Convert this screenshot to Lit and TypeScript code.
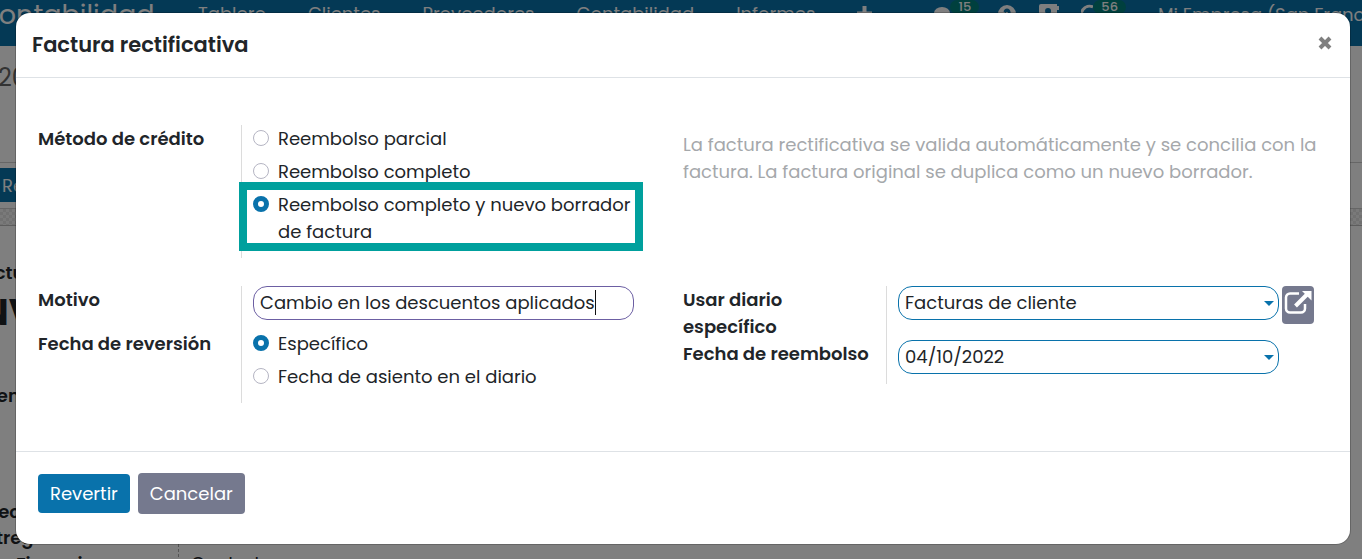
import { LitElement, html, css, svg } from "lit";
import { customElement, state } from "lit/decorators.js";

const baseFont = css`
  :host {
    font-family: Poppins, Inter, "Open Sans", sans-serif;
    font-size: 18px;
    line-height: 27px;
    color: #212529;
  }
  * {
    box-sizing: border-box;
  }
`;

@customElement("invoice-page")
class InvoicePage extends LitElement {
  static styles = [
    baseFont,
    css`
      :host {
        display: block;
        height: 100%;
        overflow: hidden;
        background: #fff;
      }
      .nav {
        height: 46px;
        display: flex;
        align-items: center;
        background: #0972ab;
        color: #fff;
        white-space: nowrap;
        overflow: hidden;
      }
      .brand {
        font-size: 27px;
        margin-left: -22px;
        width: 220px;
        padding-bottom: 18px;
        flex: none;
      }
      .menu {
        display: flex;
        gap: 42px;
        padding-bottom: 20px;
      }
      .menu a {
        color: inherit;
        text-decoration: none;
      }
      .menu svg {
        display: block;
        margin-top: 6px;
      }
      .tray {
        margin-left: auto;
        display: flex;
        align-items: flex-start;
        height: 46px;
      }
      .tray svg {
        display: block;
        margin-top: 4px;
        fill: #fff;
      }
      .chip {
        background: #00807d;
        border-radius: 12px;
        font-size: 13px;
        line-height: 14px;
        padding: 0 8px;
        font-weight: 500;
      }
      .help {
        margin-left: 18px;
      }
      .book {
        margin-left: 22px;
      }
      .clock {
        margin-left: 22px;
      }
      .company {
        width: 204px;
        margin-left: 32px;
        padding-top: 1px;
      }
      .crumbs {
        height: 117px;
        border-bottom: 1px solid #ccc;
        margin-left: -24px;
        padding: 18px 22px;
        font-size: 24px;
        color: #666;
      }
      .status {
        height: 46px;
        padding: 5px 0;
        border-bottom: 1px solid #ccc;
        margin-left: -12px;
      }
      .status button {
        border: 0;
        height: 34px;
        padding: 0 14px;
        background: #0972ab;
        color: #fff;
        font: inherit;
      }
      .strip {
        height: 17px;
        border-bottom: 1px solid #bbb;
        background: repeating-conic-gradient(#e2e2e2 0 25%, #f4f4f4 0 50%) 0 0 / 6px 6px;
      }
      .sheet {
        margin-left: -27px;
        padding-top: 33px;
        font-weight: 600;
      }
      .number {
        font-size: 36px;
        line-height: 54px;
        font-weight: 700;
        margin-left: -2px;
      }
      .client {
        padding-top: 42px;
        height: 159px;
      }
      .terms {
        display: flex;
        line-height: 26px;
      }
      .term-label {
        width: 205px;
      }
      .indent {
        padding-left: 43px;
      }
      .term-value {
        margin-top: 30px;
        border-left: 1px dashed #aaa;
        padding: 22px 0 0 12px;
        font-weight: 400;
      }
    `,
  ];

  render() {
    const menus = ["Tablero", "Clientes", "Proveedores", "Contabilidad", "Informes"];
    return html`
      <nav class="nav">
        <div class="brand">Contabilidad</div>
        <div class="menu">
          ${menus.map((m) => html`<a href="#">${m}</a>`)}
          <a href="#" aria-label="Nuevo">
            <svg width="15" height="15" viewBox="0 0 15 15"><path d="M7.500 0v15M0 7.500h15" stroke="#fff" stroke-width="4" /></svg>
          </a>
        </div>
        <div class="tray">
          <svg width="16" height="18" viewBox="0 0 16 18"><ellipse cx="8" cy="9" rx="8" ry="6" /></svg>
          <span class="chip">15</span>
          <svg class="help" width="20" height="20" viewBox="0 0 20 20">
            <path fill-rule="evenodd" d="M10 1a9 9 0 1 0 0 18a9 9 0 0 0 0-18zm0 3.500a4 4 0 0 1 1.500 7.500v1.500h-3v-3c3 0 3-2.500 1.500-2.500c-1 0-1.200.5-1.500 1l-2-1.500c.5-1.500 1.500-3 3.500-3z" />
          </svg>
          <svg class="book" width="20" height="18" viewBox="0 0 20 18">
            <path fill-rule="evenodd" d="M2 0h16v2h2v4h-2v12H0V2a2 2 0 0 1 2-2zm7 4a3 3 0 1 0 .1 6a3 3 0 0 0-.1-6z" />
          </svg>
          <svg class="clock" width="12" height="18" viewBox="0 0 12 18">
            <path d="M12 3A8 8 0 0 0 3 16" fill="none" stroke="#fff" stroke-width="3" />
          </svg>
          <span class="chip">56</span>
          <span class="company">Mi Empresa (San Francisco)</span>
        </div>
      </nav>
      <div class="crumbs">2022</div>
      <div class="status"><button>Restablecer</button></div>
      <div class="strip"></div>
      <div class="sheet">
        <div>Factura de cliente</div>
        <div class="number">INV/2022</div>
        <div class="client">Cliente</div>
        <div class="terms">
          <div class="term-label">
            <div>Dirección de</div>
            <div>entrega</div>
            <div class="indent">Financiera</div>
          </div>
          <div class="term-value">Contado</div>
        </div>
      </div>
    `;
  }
}

@customElement("credit-dialog")
class CreditDialog extends LitElement {
  static styles = [
    baseFont,
    css`
      :host {
        display: block;
        background: #fff;
        border-radius: 14px;
        box-shadow: 0 0 0 1px rgba(0, 0, 0, 0.2);
      }
      header {
        display: flex;
        align-items: center;
        justify-content: space-between;
        padding: 18px 18px 19px 16px;
        border-bottom: 1px solid #dee2e6;
      }
      h1 {
        margin: 0;
        font-size: 21px;
        line-height: 27px;
        font-weight: 600;
      }
      button {
        font: inherit;
        border: 0;
        cursor: pointer;
      }
      .close {
        display: flex;
        padding: 0;
        margin-bottom: 4px;
        background: none;
      }
      .body {
        display: grid;
        grid-template-columns: 1fr 1fr;
        gap: 28px 14px;
        align-items: start;
        padding: 47px 36px 48px 22px;
      }
      .row {
        display: grid;
        grid-template-columns: 203px 1fr;
      }
      .label {
        font-weight: 600;
        padding-right: 16px;
      }
      .field {
        position: relative;
        border-left: 1px solid #dcdcdc;
        padding: 0 35px 10px 11px;
      }
      .choices {
        display: grid;
        gap: 6px;
        padding-bottom: 13px;
      }
      .option {
        position: relative;
        display: flex;
        gap: 9px;
      }
      .option input {
        appearance: none;
        flex: none;
        width: 16px;
        height: 16px;
        margin: 5px 0 0;
        border: 1px solid #b5b5c3;
        border-radius: 50%;
        background: #fff;
      }
      .option input:checked {
        border: 5px solid #0972ab;
      }
      .marked::after {
        content: "";
        position: absolute;
        inset: -9px -9px -6px -14px;
        border: 8px solid #00a09d;
        pointer-events: none;
      }
      .help {
        margin: 0 -12px 0 0;
        padding-top: 6px;
        color: #a5a8ab;
      }
      .box {
        display: block;
        width: 100%;
        height: 34px;
        padding: 0 6px 1px;
        border: 1px solid #0972ab;
        border-radius: 14px;
        background: #fff;
        color: inherit;
        font: inherit;
        outline: none;
        appearance: none;
      }
      .focused {
        border-color: #6c5fa3;
      }
      .cursor {
        position: absolute;
        top: 4px;
        left: 353px;
        width: 1px;
        height: 25px;
        background: #111;
      }
      .arrow {
        position: absolute;
        top: 15px;
        right: 40px;
        pointer-events: none;
      }
      .with-link {
        display: flex;
        gap: 3px;
        padding-right: 0;
      }
      .link {
        flex: none;
        display: grid;
        justify-content: center;
        align-items: start;
        width: 32px;
        height: 38px;
        padding: 4px 0 0;
        border-radius: 4px;
        background: #75798e;
      }
      footer {
        display: flex;
        align-items: center;
        gap: 8px;
        padding: 21px 22px 30px;
        border-top: 1px solid #dee2e6;
      }
      .primary,
      .secondary {
        border-radius: 4px;
        color: #fff;
        padding: 6px 12px;
        background: #0972ab;
      }
      .secondary {
        padding: 7px 12px;
        background: #75798e;
      }
    `,
  ];

  @state() method = "Reembolso completo y nuevo borrador de factura";
  @state() dateMode = "Específico";

  option(group: "method" | "dateMode", text: string, marked = false) {
    return html`<label class="option ${marked ? "marked" : ""}">
      <input type="radio" name=${group} .checked=${this[group] === text} @change=${() => (this[group] = text)} />
      <span>${text}</span>
    </label>`;
  }

  arrow() {
    return html`<svg class="arrow" width="10" height="5" viewBox="0 0 10 5">${svg`<path d="M0 0h10L5 5z" fill="#0972ab"/>`}</svg>`;
  }

  render() {
    return html`
      <header>
        <h1>Factura rectificativa</h1>
        <button class="close" aria-label="Cerrar">
          <svg width="14" height="14" viewBox="0 0 14 14">
            <path d="M2 2l10 10M12 2L2 12" stroke="#7f7f7f" stroke-width="4" />
          </svg>
        </button>
      </header>
      <div class="body">
        <div class="row" role="radiogroup" aria-labelledby="m">
          <div class="label" id="m">Método de crédito</div>
          <div class="field choices">
            ${this.option("method", "Reembolso parcial")}
            ${this.option("method", "Reembolso completo")}
            ${this.option("method", "Reembolso completo y nuevo borrador de factura", true)}
          </div>
        </div>
        <p class="help">
          La factura rectificativa se valida automáticamente y se concilia con la factura. La factura original se
          duplica como un nuevo borrador.
        </p>
        <div>
          <div class="row">
            <label class="label" for="reason">Motivo</label>
            <div class="field">
              <input class="box focused" id="reason" type="text" value="Cambio en los descuentos aplicados" />
              <span class="cursor"></span>
            </div>
          </div>
          <div class="row" role="radiogroup" aria-labelledby="d">
            <div class="label" id="d">Fecha de reversión</div>
            <div class="field choices">
              ${this.option("dateMode", "Específico")} ${this.option("dateMode", "Fecha de asiento en el diario")}
            </div>
          </div>
        </div>
        <div>
          <div class="row">
            <label class="label" for="journal">Usar diario específico</label>
            <div class="field with-link">
              <select class="box" id="journal">
                <option>Facturas de cliente</option>
              </select>
              ${this.arrow()}
              <button class="link" aria-label="Abrir diario">
                <svg width="28" height="26" viewBox="0 0 28 26" fill="none" stroke="#fff">
                  <path d="M15 3.500H6a4 4 0 0 0-4 4v11a4 4 0 0 0 4 4h11a4 4 0 0 0 4-4V14" stroke-width="2.500" />
                  <path d="M11.500 16L23 4.500" stroke-width="4" />
                  <path d="M18 1h9.500v9.500z" fill="#fff" stroke="none" />
                </svg>
              </button>
            </div>
          </div>
          <div class="row">
            <label class="label" for="date">Fecha de reembolso</label>
            <div class="field">
              <input class="box" id="date" type="text" value="04/10/2022" />
              ${this.arrow()}
            </div>
          </div>
        </div>
      </div>
      <footer>
        <button class="primary">Revertir</button>
        <button class="secondary">Cancelar</button>
      </footer>
    `;
  }
}

@customElement("app-root")
class AppRoot extends LitElement {
  static styles = css`
    :host {
      display: block;
      position: relative;
      height: 100vh;
      overflow: hidden;
    }
    .backdrop {
      position: absolute;
      inset: 0;
      padding: 13px 12px 0 16px;
      background: rgba(0, 0, 0, 0.5);
    }
  `;

  render() {
    return html`
      <invoice-page></invoice-page>
      <div class="backdrop"><credit-dialog role="dialog"></credit-dialog></div>
    `;
  }
}
